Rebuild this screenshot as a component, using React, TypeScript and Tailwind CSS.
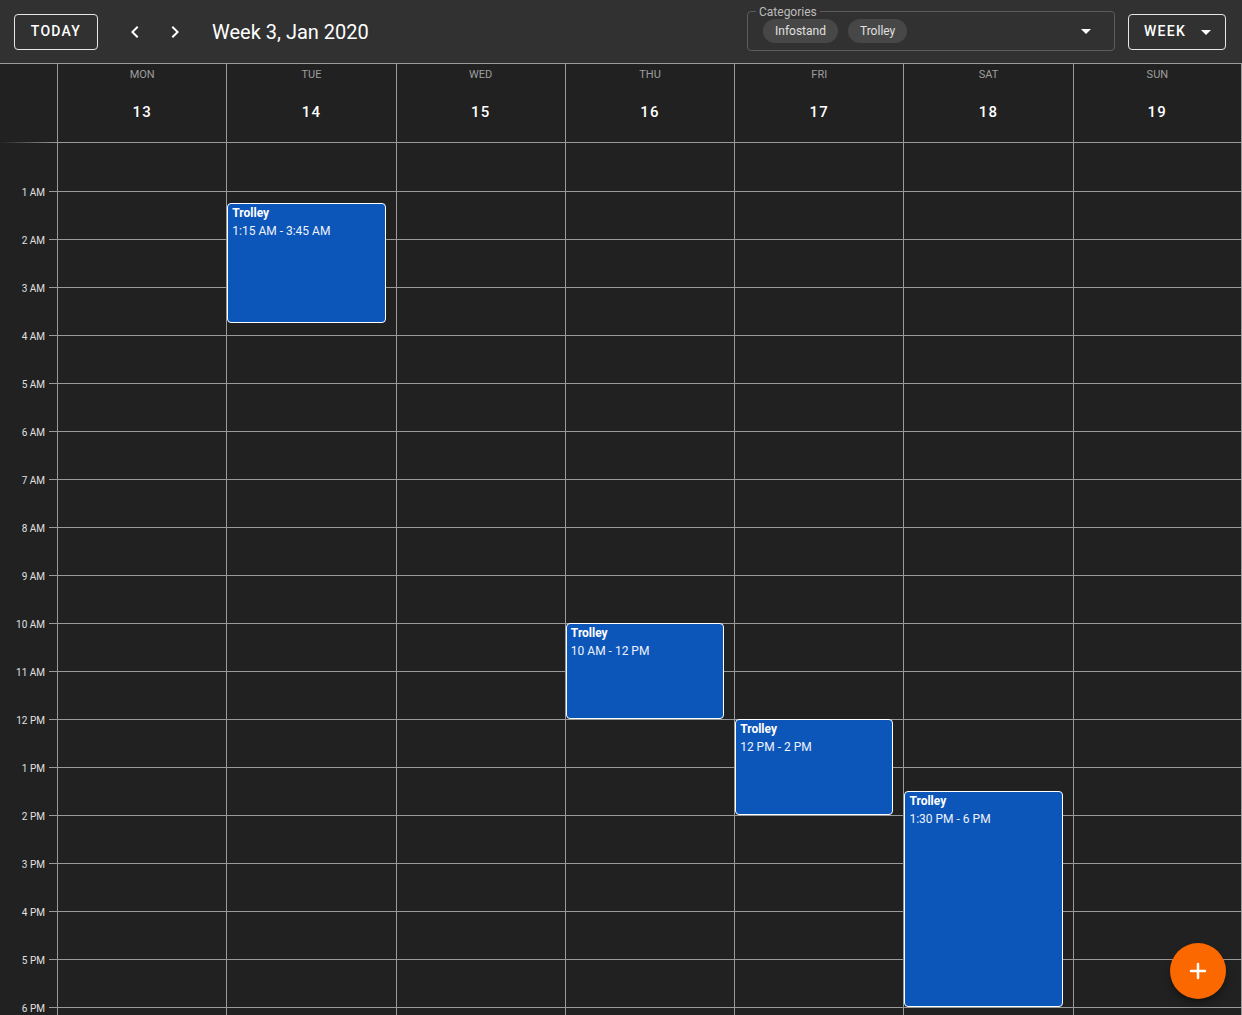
import { Plus } from "lucide-react";

const days = [
  { name: "Mon", date: 13 },
  { name: "Tue", date: 14 },
  { name: "Wed", date: 15 },
  { name: "Thu", date: 16 },
  { name: "Fri", date: 17 },
  { name: "Sat", date: 18 },
  { name: "Sun", date: 19 },
];

const hours = Array.from({ length: 24 }, (_, i) => i);

const events = [
  { day: 1, name: "Trolley", start: 75, end: 225, label: "1:15 AM - 3:45 AM" },
  { day: 3, name: "Trolley", start: 600, end: 720, label: "10 AM - 12 PM" },
  { day: 4, name: "Trolley", start: 720, end: 840, label: "12 PM - 2 PM" },
  { day: 5, name: "Trolley", start: 810, end: 1080, label: "1:30 PM - 6 PM" },
];

function hourLabel(h: number) {
  if (h === 0) return "";
  if (h === 12) return "12 PM";
  return h < 12 ? `${h} AM` : `${h - 12} PM`;
}

function ChevronLeft() {
  return (
    <svg viewBox="0 0 24 24" className="h-6 w-6 fill-white">
      <path d="M15.41 7.41L14 6l-6 6 6 6 1.41-1.41L10.83 12z" />
    </svg>
  );
}

function ChevronRight() {
  return (
    <svg viewBox="0 0 24 24" className="h-6 w-6 fill-white">
      <path d="M8.59 16.59L10 18l6-6-6-6-1.41 1.41L13.17 12z" />
    </svg>
  );
}

function ArrowDrop({ className }: { className: string }) {
  return (
    <svg viewBox="0 0 24 24" className={className}>
      <path d="M7 10l5 5 5-5z" />
    </svg>
  );
}

function Toolbar() {
  return (
    <div className="flex h-[63px] items-center bg-[#313131] pl-[14px] pr-[16px] text-white">
      <button className="flex h-9 w-[84px] items-center justify-center rounded-[4px] border border-[#e6e6e6] text-[14px] font-medium uppercase tracking-[0.09em]">
        Today
      </button>
      <div className="ml-[19px] flex items-center gap-1">
        <button className="flex h-9 w-9 items-center justify-center rounded-full">
          <ChevronLeft />
        </button>
        <button className="flex h-9 w-9 items-center justify-center rounded-full">
          <ChevronRight />
        </button>
      </div>
      <div className="ml-[19px] text-[20px] leading-none">Week 3, Jan 2020</div>
      <div className="flex-1" />
      <div className="relative mt-[-2px] flex h-10 w-[368px] items-center rounded-[4px] border border-[#5c5c5c] pl-[15px] pr-[16px]">
        <span className="absolute left-[8px] top-[-7px] bg-[#313131] px-[3px] text-[12px] leading-[14px] text-[#bdbdbd]">
          Categories
        </span>
        <div className="flex flex-1 gap-[10px] pt-[1px]">
          <span className="flex h-6 items-center rounded-full bg-[#474747] px-[12px] text-[12px] text-[#e0e0e0]">
            Infostand
          </span>
          <span className="flex h-6 items-center rounded-full bg-[#474747] px-[12px] text-[12px] text-[#e0e0e0]">
            Trolley
          </span>
        </div>
        <ArrowDrop className="h-6 w-6 fill-white" />
      </div>
      <button className="ml-[13px] flex h-9 w-[98px] items-center justify-center gap-[8px] rounded-[4px] border border-[#e6e6e6] pl-[8px] text-[14px] font-medium uppercase tracking-[0.09em]">
        Week
        <ArrowDrop className="h-6 w-6 fill-white" />
      </button>
    </div>
  );
}

function Header() {
  return (
    <div className="grid h-[80px] grid-cols-[57px_repeat(7,1fr)] border-t border-[#9a9a9a]">
      <div className="relative">
        <div className="absolute bottom-0 left-0 h-px w-full bg-gradient-to-r from-transparent to-[#9a9a9a]" />
      </div>
      {days.map((d) => (
        <div
          key={d.name}
          className="flex flex-col items-center border-b border-l border-[#9a9a9a] pt-[3px] last:border-r"
        >
          <div className="text-[11px] uppercase leading-4 text-[#9e9e9e]">{d.name}</div>
          <div className="mt-[5px] flex h-12 w-12 items-center justify-center text-[15px] font-medium tracking-[0.08em] text-white">
            {d.date}
          </div>
        </div>
      ))}
    </div>
  );
}

function Body() {
  return (
    <div className="grid grid-cols-[57px_repeat(7,1fr)]">
      <div>
        {hours.map((h) => (
          <div key={h} className="relative h-12">
            {h > 0 && (
              <>
                <span className="absolute right-[12px] top-[-5px] text-[10px] leading-[14px] text-[#e0e0e0]">
                  {hourLabel(h)}
                </span>
                <div className="absolute right-0 top-0 h-px w-[8px] bg-[#9a9a9a]" />
              </>
            )}
          </div>
        ))}
      </div>
      {days.map((d, di) => (
        <div key={d.name} className="relative border-l border-[#9a9a9a] last:border-r">
          {hours.map((h) => (
            <div key={h} className={h === 0 ? "h-12" : "h-12 border-t border-[#9a9a9a]"} />
          ))}
          {events
            .filter((e) => e.day === di)
            .map((e) => (
              <div
                key={e.label}
                className="absolute left-0 right-[10px] overflow-hidden rounded-[4px] border border-white bg-[#0c56ba] px-[4px] text-[12px] leading-[18px] text-white"
                style={{ top: e.start * 0.8, height: (e.end - e.start) * 0.8 }}
              >
                <div className="font-bold">{e.name}</div>
                <div className="text-[#eef3fb]">{e.label}</div>
              </div>
            ))}
        </div>
      ))}
    </div>
  );
}

export default function App() {
  return (
    <div className="relative h-[1015px] overflow-hidden bg-[#212121] font-['Roboto',sans-serif]">
      <Toolbar />
      <Header />
      <Body />
      <button className="fixed bottom-4 right-4 flex h-14 w-14 items-center justify-center rounded-full bg-[#fb6800] text-white shadow-[0_3px_5px_-1px_rgba(0,0,0,0.3),0_6px_10px_0_rgba(0,0,0,0.2)]">
        <Plus className="h-6 w-6" strokeWidth={2.5} />
      </button>
    </div>
  );
}
